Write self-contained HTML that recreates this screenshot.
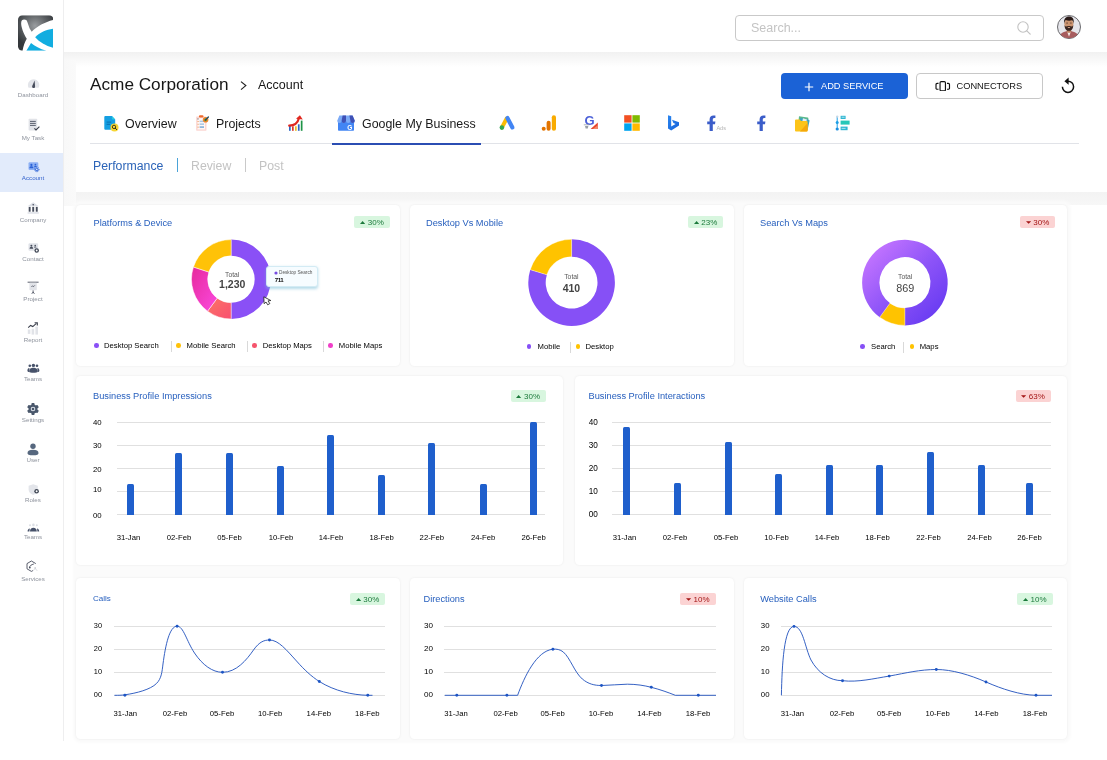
<!DOCTYPE html>
<html>
<head>
<meta charset="utf-8">
<title>Acme Corporation - Account</title>
<style>
*{box-sizing:border-box;margin:0;padding:0}
html,body{width:1107px;height:760px;overflow:hidden;background:#fff}
body{font-family:"Liberation Sans",sans-serif;color:#111;position:relative}
#root{position:absolute;left:0;top:0;width:1107px;height:760px;will-change:transform}
.abs{position:absolute}
/* sidebar */
#side{position:absolute;left:0;top:0;width:64px;height:741px;background:#fff;border-right:1px solid #eeeeef}
.nav{position:absolute;left:1px;width:64px;text-align:center;font-size:6.2px;color:#8d929c;line-height:8px}
.nav svg{display:block;margin:0 auto}
#navact{position:absolute;left:0;top:153px;width:63px;height:39px;background:#e2ebfb}
/* header */
#hdr{position:absolute;left:64px;top:0;width:1043px;height:52px;background:#fff}
#hshadow{position:absolute;left:64px;top:52px;width:1043px;height:15px;background:linear-gradient(#f1f1f1,#fff)}
#search{position:absolute;left:735px;top:15px;width:309px;height:26px;border:1px solid #c9c9c9;border-radius:4px;background:#fff}
#search span{position:absolute;left:15px;top:5px;font-size:12.5px;color:#c4c4c4}
/* top panel */
#gap{position:absolute;left:75.500px;top:192px;width:1031.500px;height:13px;background:linear-gradient(#f3f3f3,#f7f7f7)}
#lstrip{position:absolute;left:64px;top:60px;width:12px;height:146px;background:linear-gradient(90deg,#f8f8f8,#fafafa)}
.crumb1{position:absolute;left:90px;top:74px;font-size:17.2px;color:#161616;white-space:nowrap}
.crumb2{position:absolute;left:258px;top:78.200px;font-size:12.5px;color:#161616}
.btn{position:absolute;top:73px;height:25.500px;border-radius:4px;font-size:9.25px;line-height:26.500px;white-space:nowrap}
#tabline{position:absolute;left:90px;top:143px;width:989px;height:1px;background:#e1e3e8}
#tabact{position:absolute;left:332px;top:142.500px;width:149px;height:2px;background:#2b4db3}
.tab{position:absolute;top:116.700px;font-size:12.4px;color:#1a1a1a;white-space:nowrap}
.sub{position:absolute;top:158.700px;font-size:12.3px;white-space:nowrap}
/* cards */
.card{position:absolute;background:#fff;border-radius:4.5px;box-shadow:0 0 2.500px rgba(0,0,0,.075)}
#backdrop{position:absolute;left:74.500px;top:203px;width:994px;height:537.500px;background:#fbfbfb;border-radius:6px;box-shadow:0 0 3px 2px #fbfbfb}
.ttl{position:absolute;font-size:9.25px;color:#2860be;white-space:nowrap}
.bdg{position:absolute;height:12px;border-radius:2px;font-size:8px;line-height:13px;text-align:center;white-space:nowrap}
.up{background:#d8f6df;color:#1c7a3c}
.dn{background:#fbd3d3;color:#a31515}
.lbl{position:absolute;font-size:7.7px;color:#000;white-space:nowrap}
.xl{position:absolute;font-size:7.7px;color:#000;white-space:nowrap;transform:translateX(-50%)}
.gl{position:absolute;height:1px;background:#e0e0e0}
.bar{position:absolute;width:7px;background:#1f5fcc;border-radius:1.5px 1.5px 0 0}
.lg{position:absolute;font-size:7.7px;color:#000;white-space:nowrap;margin-top:-0.600px}
.dot{position:absolute;width:4.600px;height:4.600px;border-radius:50%;margin:-0.300px 0 0 -0.300px}
.sep{position:absolute;width:1px;height:11px;background:#d9d9d9}
</style>
</head>
<body>
<div id="root">
<!-- HEADER -->
<div id="hdr"></div>
<div id="hshadow"></div>
<div id="lstrip"></div>
<div id="gap"></div>
<div id="search"><span>Search...</span></div>

<!-- SIDEBAR -->
<div id="side"></div>
<div id="navact"></div>
<!-- logo -->
<svg class="abs" style="left:17.500px;top:15px" width="35.500" height="36" viewBox="0 0 36 36">
<defs><clipPath id="lgc"><rect x="0" y="0" width="36" height="36" rx="4.600"/></clipPath>
<radialGradient id="lgg" cx="0.480" cy="0.300" r="0.600"><stop offset="0" stop-color="#9a9da0"/><stop offset="0.550" stop-color="#5e6265"/><stop offset="1" stop-color="#34383b"/></radialGradient></defs>
<g clip-path="url(#lgc)"><rect width="36" height="36" fill="#fff"/>
<path d="M0,0H36V4.600C28,6.500 19,11 13.900,16.700L11.700,13.100L9.400,6.500C9,5 8,4.200 6.200,4.200C4.500,4.200 3.200,5 3.200,8C3.200,12.400 6,19 8.900,23.800C7,27 5.500,31 4.600,36H0Z" fill="url(#lgg)"/>
<path d="M17.400,22.400C22,17.500 29,14.500 36,13.700V33.200C28,31 22,27.500 17.400,22.400Z" fill="#12ade0"/>
<path d="M13.200,28.100C17,31 22,34 28.800,36H8.500Z" fill="#12ade0"/></g></svg>
<!-- dashboard -->
<svg class="abs" style="left:27px;top:77.500px" width="13" height="11" viewBox="0 0 13 11"><path d="M1.600 9.800A5.700 5.700 0 1 1 11.600 9.800Z" fill="#e3e5ea"/><path d="M7.600 2.600L8.100 8.400A1.500 1.500 0 1 1 5.300 7.700Z" fill="#474d5c"/></svg>
<!-- my task -->
<svg class="abs" style="left:28px;top:118px" width="13" height="14" viewBox="0 0 13 14"><rect x="0.600" y="0.800" width="8.600" height="11.800" rx="0.800" fill="#e1e3e8"/><path d="M2 3.400H7.800M2 5.400H7.800M2 7.400H7.800" stroke="#4a5060" stroke-width="0.900"/><path d="M6.400 10.400L8 12L11.400 8.600" fill="none" stroke="#3a3f4c" stroke-width="1.100"/></svg>
<!-- account -->
<svg class="abs" style="left:27.500px;top:162px" width="13" height="11" viewBox="0 0 13 11"><rect x="0.500" y="0.300" width="9.800" height="7.600" rx="1.200" fill="#8db0f4"/><circle cx="3.400" cy="2.900" r="1.100" fill="#2b62d6"/><path d="M1.400 6.200C1.400 4.700 2.200 4.300 3.400 4.300C4.600 4.300 5.400 4.700 5.400 6.200Z" fill="#2b62d6"/><circle cx="7.400" cy="2.700" r="0.900" fill="#2b62d6"/><path d="M6 5.200C6 4.200 6.600 3.900 7.400 3.900C8.200 3.900 8.800 4.200 8.800 5.200Z" fill="#2b62d6"/><circle cx="8.800" cy="7.400" r="2" fill="#2b62d6" stroke="#e2ebfb" stroke-width="0.500"/><circle cx="8.800" cy="7.400" r="2.300" fill="none" stroke="#2b62d6" stroke-width="0.900" stroke-dasharray="0.900 0.900"/><circle cx="8.800" cy="7.400" r="0.800" fill="#e2ebfb"/></svg>
<!-- company -->
<svg class="abs" style="left:26.500px;top:202px" width="13" height="12" viewBox="0 0 13 12"><path d="M6.200 0.300L11.800 4.300H0.600Z" fill="#dcdfe6"/><rect x="0.600" y="10.200" width="11.200" height="1.500" fill="#dcdfe6"/><rect x="1.700" y="4.900" width="1.900" height="4.800" fill="#474d5c"/><rect x="5.250" y="4.900" width="1.900" height="4.800" fill="#474d5c"/><rect x="8.800" y="4.900" width="1.900" height="4.800" fill="#474d5c"/><circle cx="6.200" cy="2.700" r="0.800" fill="#474d5c"/></svg>
<!-- contact -->
<svg class="abs" style="left:27.500px;top:243px" width="13" height="11" viewBox="0 0 13 11"><rect x="0.500" y="0.300" width="9.600" height="7.400" rx="1.200" fill="#dfe2e8"/><circle cx="3.400" cy="2.700" r="1" fill="#474d5c"/><path d="M1.600 5.800C1.600 4.500 2.300 4.100 3.400 4.100C4.500 4.100 5.200 4.500 5.200 5.800Z" fill="#474d5c"/><circle cx="7.200" cy="2.500" r="0.800" fill="#474d5c"/><path d="M6 4.600C6 3.800 6.500 3.500 7.200 3.500C7.900 3.500 8.400 3.800 8.400 4.600Z" fill="#474d5c"/><circle cx="8.700" cy="7.500" r="2.250" fill="#3f4654"/><circle cx="8.700" cy="7.500" r="0.950" fill="#fff"/></svg>
<!-- project -->
<svg class="abs" style="left:26.500px;top:281px" width="13" height="14" viewBox="0 0 13 14"><path d="M0.600 1.200H11.600" stroke="#474d5c" stroke-width="0.900"/><rect x="2.400" y="1.800" width="7.400" height="7.400" rx="0.600" fill="#e1e3e8"/><path d="M4.400 6L5.600 4.800L6.600 5.600L7.800 4.400" fill="none" stroke="#474d5c" stroke-width="0.800"/><path d="M6.100 9.400V11M4.800 12.800L6.100 11L7.400 12.800" fill="none" stroke="#474d5c" stroke-width="0.900"/></svg>
<!-- report -->
<svg class="abs" style="left:26.500px;top:321.700px" width="13" height="13" viewBox="0 0 13 13"><rect x="0.800" y="7.500" width="2.600" height="4.400" fill="#e1e3e8"/><rect x="4.600" y="6.800" width="2.600" height="5.800" fill="#e1e3e8"/><rect x="8.400" y="4.600" width="2.600" height="8" fill="#e1e3e8"/><path d="M1.200 5.600L3.600 3.400L5.800 4.600L9.400 1.400" fill="none" stroke="#3a3f4c" stroke-width="1.100"/><path d="M7.600 0.800H10.300V3.400" fill="none" stroke="#3a3f4c" stroke-width="1.100"/></svg>
<!-- teams -->
<svg class="abs" style="left:27px;top:363px" width="13" height="11" viewBox="0 0 13 11"><circle cx="6.400" cy="2.400" r="1.700" fill="#47526a"/><circle cx="2.800" cy="2.800" r="1.300" fill="#47526a"/><circle cx="10" cy="2.800" r="1.300" fill="#47526a"/><path d="M2.200 8.800C2.200 5.600 4 4.800 6.400 4.800C8.800 4.800 10.600 5.600 10.600 8.800C10.600 10.200 2.200 10.200 2.200 8.800Z" fill="#47526a"/><path d="M0.400 7.800C0.400 6 1 5.200 2.400 5V9C1.200 9 0.400 8.800 0.400 7.800ZM12.400 7.800C12.400 6 11.800 5.200 10.400 5V9C11.600 9 12.400 8.800 12.400 7.800Z" fill="#47526a"/></svg>
<!-- settings -->
<svg class="abs" style="left:26.500px;top:402.500px" width="12" height="12" viewBox="0 0 12 12"><g transform="translate(6 6)"><g fill="#4a586c"><rect x="-1.500" y="-5.900" width="3" height="11.800" rx="0.600"/><rect x="-1.500" y="-5.900" width="3" height="11.800" rx="0.600" transform="rotate(60)"/><rect x="-1.500" y="-5.900" width="3" height="11.800" rx="0.600" transform="rotate(120)"/><circle r="4.500"/></g><circle r="2.300" fill="#dfe4ec"/><circle r="1.300" fill="#4a586c"/></g></svg>
<!-- user -->
<svg class="abs" style="left:26.500px;top:442.500px" width="12" height="13" viewBox="0 0 12 13"><circle cx="6" cy="3.300" r="2.700" fill="#56677e"/><path d="M0.500 10C0.500 7.600 2.600 6.800 6 6.800C9.400 6.800 11.500 7.600 11.500 10C11.500 11.600 10 12.300 6 12.300C2 12.300 0.500 11.600 0.500 10Z" fill="#56677e"/></svg>
<!-- roles -->
<svg class="abs" style="left:27.500px;top:484px" width="12" height="12" viewBox="0 0 12 12"><path d="M5.200 0.200L9.800 1.800V5.600C9.800 8.400 7.600 10.200 5.200 11C2.800 10.200 0.600 8.400 0.600 5.600V1.800Z" fill="#e3e5ea"/><circle cx="8.600" cy="7.300" r="2.300" fill="#3f4654"/><circle cx="8.600" cy="7.300" r="1" fill="#fff"/></svg>
<!-- teams 2 -->
<svg class="abs" style="left:27px;top:523px" width="13" height="10" viewBox="0 0 13 10"><circle cx="6.400" cy="1.900" r="1.300" fill="#dcdfe5"/><circle cx="3" cy="2.300" r="1" fill="#dcdfe5"/><circle cx="9.800" cy="2.300" r="1" fill="#dcdfe5"/><path d="M3 8.400C3 6 4.400 4.800 6.400 4.800C8.400 4.800 9.800 6 9.800 8.400Z" fill="#47526a"/><path d="M0.600 8.400C0.600 6.600 1.400 5.600 2.800 5.400L2.400 8.400ZM12.200 8.400C12.200 6.600 11.400 5.600 10 5.400L10.400 8.400Z" fill="#47526a"/></svg>
<!-- services -->
<svg class="abs" style="left:26px;top:560px" width="12" height="13" viewBox="0 0 12 13"><path d="M9.800 3.600L5.400 1L1 3.600V8.800L5.400 11.400L7 10.500" fill="none" stroke="#474d5c" stroke-width="0.900"/><path d="M3.600 7.400C3.600 5.600 5.400 4.800 7.800 4" fill="none" stroke="#474d5c" stroke-width="0.900"/><circle cx="3.800" cy="7.600" r="0.900" fill="#474d5c"/><path d="M7 10.800L9.200 8.400L11.200 10.800" fill="none" stroke="#cfd2d8" stroke-width="0.800"/><circle cx="9.200" cy="8" r="0.900" fill="#cfd2d8"/></svg>
<div class="nav" style="top:90.7px;color:#8d929c">Dashboard</div>
<div class="nav" style="top:133.9px;color:#8d929c">My Task</div>
<div class="nav" style="top:174.4px;color:#3463cc">Account</div>
<div class="nav" style="top:215.5px;color:#8d929c">Company</div>
<div class="nav" style="top:254.6px;color:#8d929c">Contact</div>
<div class="nav" style="top:294.9px;color:#8d929c">Project</div>
<div class="nav" style="top:335.7px;color:#8d929c">Report</div>
<div class="nav" style="top:374.6px;color:#8d929c">Teams</div>
<div class="nav" style="top:415.7px;color:#8d929c">Settings</div>
<div class="nav" style="top:456.3px;color:#8d929c">User</div>
<div class="nav" style="top:496.0px;color:#8d929c">Roles</div>
<div class="nav" style="top:533.1px;color:#8d929c">Teams</div>
<div class="nav" style="top:574.7px;color:#8d929c">Services</div>

<!-- TOP PANEL -->
<div class="crumb1">Acme Corporation</div>
<svg class="abs" style="left:238px;top:79px" width="10" height="13" viewBox="0 0 10 13"><path d="M3 2.600 L7.800 6.600 L3 10.600" fill="none" stroke="#222" stroke-width="1.200"/></svg>
<div class="crumb2">Account</div>
<!-- search icon -->
<svg class="abs" style="left:1016px;top:20px" width="16" height="16" viewBox="0 0 16 16"><circle cx="7" cy="7" r="5.2" fill="none" stroke="#c2c2c2" stroke-width="1.1"/><path d="M10.8 10.8 L14.2 14.2" stroke="#c2c2c2" stroke-width="1.2" stroke-linecap="round"/></svg>
<!-- avatar -->
<svg class="abs" style="left:1057.400px;top:15px" width="24" height="24" viewBox="0 0 24 24">
<defs><clipPath id="avc"><circle cx="12" cy="12" r="11.200"/></clipPath></defs>
<circle cx="12" cy="12" r="11.500" fill="#e5e5ea" stroke="#5a5a5e" stroke-width="0.900"/>
<g clip-path="url(#avc)"><g transform="translate(0.200 -0.900)">
<path d="M1.500 25C2.200 19 7 17 11.800 17C16.600 17 21.500 19 22.200 25Z" fill="#a75c5e"/>
<path d="M10 17.600L11.800 22.600L13.600 17.600Z" fill="#f3ece9"/>
<path d="M9.600 14.500V17.800C10.600 19 13 19 14 17.800V14.500Z" fill="#b97f60"/>
<ellipse cx="11.700" cy="10" rx="4.500" ry="5.400" fill="#cb9470"/>
<path d="M7.300 10.800C7.500 15.600 9.800 16.700 11.700 16.700C13.600 16.700 15.900 15.600 16.100 10.800C15.400 12.600 14.200 12.400 13.400 12.200C12.400 11.900 11 11.900 10 12.200C9.200 12.400 8 12.600 7.300 10.800Z" fill="#3a2621"/>
<path d="M10.300 13.300C11.200 12.900 12.200 12.900 13.100 13.300C12.400 14 11 14 10.300 13.300Z" fill="#c99a80"/>
<path d="M6.900 9.800C6.200 4.600 8.800 2.400 11.900 2.400C15.200 2.400 17.200 4.800 16.500 9.800C16.200 7.800 15.700 6.800 14.800 6.200C12.600 6.900 10.200 6.700 8.600 6C7.800 6.800 7.200 8 6.900 9.800Z" fill="#2a1b18"/>
<rect x="9" y="8.600" width="1.800" height="0.700" fill="#4a3028"/><rect x="12.700" y="8.600" width="1.800" height="0.700" fill="#4a3028"/>
</g></g></svg>
<!-- buttons -->
<div class="btn" style="left:781px;width:127px;background:#1b62d6;color:#fff"><svg class="abs" style="left:23px;top:8.500px" width="10" height="10" viewBox="0 0 10 10"><path d="M5 0.8V9.2M0.8 5H9.2" stroke="#fff" stroke-width="1.2"/></svg><span class="abs" style="left:40px;top:0">ADD SERVICE</span></div>
<div class="btn" style="left:915.500px;width:127px;background:#fff;border:1px solid #c8c8c8;color:#111;line-height:24.500px"><svg class="abs" style="left:18.500px;top:6.700px" width="15.500" height="10.600" viewBox="0 0 16 11"><rect x="5.2" y="0.7" width="5.6" height="9.6" rx="1.2" fill="none" stroke="#111" stroke-width="1.2"/><path d="M3.6 2.4H2.2a1.2 1.2 0 0 0-1.2 1.2v3.8a1.2 1.2 0 0 0 1.2 1.2h1.4M12.4 2.4h1.4a1.2 1.2 0 0 1 1.2 1.2v3.8a1.2 1.2 0 0 1-1.2 1.2h-1.4" fill="none" stroke="#111" stroke-width="1.2"/></svg><span class="abs" style="left:40px;top:0">CONNECTORS</span></div>
<!-- refresh -->
<svg class="abs" style="left:1060px;top:76.800px" width="16" height="19" viewBox="0 0 16 19"><path d="M8 4.2 A5.6 5.6 0 1 1 2.4 9.8" fill="none" stroke="#111" stroke-width="1.5"/><path d="M8.6 0.6 L4.4 4.2 L8.6 7.8 Z" fill="#111"/></svg>
<!-- TAB ICONS -->
<!-- overview -->
<svg class="abs" style="left:103px;top:115px" width="17" height="17" viewBox="0 0 17 17"><path d="M2.3 1h6.6l3.3 3.4v9.3a1 1 0 0 1-1 1H2.3a1 1 0 0 1-1-1V2a1 1 0 0 1 1-1z" fill="#149fe2"/><path d="M8.9 1l3.3 3.4H9.9a1 1 0 0 1-1-1z" fill="#28cbe0"/><rect x="3.6" y="6.6" width="4.6" height="1" fill="#0b6fb0"/><rect x="3.6" y="8.8" width="3.4" height="1" fill="#0b6fb0"/><circle cx="11.5" cy="12.4" r="4" fill="#f7d634"/><circle cx="11" cy="11.9" r="1.7" fill="none" stroke="#2a2a16" stroke-width="0.9"/><path d="M12.3 13.2l1.5 1.5" stroke="#2a2a16" stroke-width="1" stroke-linecap="round"/></svg>
<!-- projects -->
<svg class="abs" style="left:195px;top:114px" width="17" height="18" viewBox="0 0 17 18"><rect x="1.1" y="2.4" width="10.4" height="14.4" rx="0.8" fill="#fbd7d3"/><rect x="2.6" y="4.2" width="7.4" height="11.2" fill="#fff6f4"/><rect x="3.9" y="1.2" width="4.6" height="2.3" rx="1.1" fill="#ef6a2c"/><rect x="2.2" y="4.6" width="1.6" height="0.7" fill="#555"/><rect x="4.6" y="6.6" width="4.4" height="1.5" fill="#a9c7e4"/><rect x="4.6" y="9.4" width="4.4" height="1.5" fill="#a9c7e4"/><rect x="4.6" y="12.2" width="4.4" height="1.8" fill="#8fb6dc"/><rect x="2.6" y="7" width="1" height="0.9" fill="#ef8a3c"/><rect x="2.6" y="9.8" width="1" height="0.9" fill="#ef8a3c"/><rect x="2.6" y="12.7" width="1" height="0.9" fill="#ef8a3c"/><circle cx="10.6" cy="5.8" r="2.8" fill="#f0832c"/><circle cx="10.6" cy="5.8" r="1.5" fill="#7a9a2c"/><path d="M10.4 6l3-3" stroke="#1f4d63" stroke-width="1.3" stroke-linecap="round"/></svg>
<!-- growth chart -->
<svg class="abs" style="left:288px;top:114px" width="16" height="18" viewBox="0 0 16 18"><rect x="1" y="11.9" width="1.7" height="4.9" fill="#2f66c4"/><rect x="4" y="12.3" width="1.7" height="4.5" fill="#d83a2e"/><rect x="7" y="12.3" width="1.7" height="4.5" fill="#e8c02c"/><rect x="9.9" y="10.3" width="1.7" height="6.5" fill="#2f66c4"/><rect x="12.8" y="6.6" width="1.7" height="10.2" fill="#1e9447"/><path d="M1.2 11.6C6.4 11.4 9.8 8.6 10.8 4.4" fill="none" stroke="#e0281f" stroke-width="2.2" stroke-linecap="round"/><path d="M8 4.7L11.9 1.2L14.8 5.6Z" fill="#e0281f"/></svg>
<!-- google my business -->
<svg class="abs" style="left:337px;top:115px" width="18" height="16" viewBox="0 0 18 16"><rect x="1" y="6" width="16" height="9.8" rx="0.8" fill="#4285f4"/><path d="M2.4 0.4h13.2l2.2 5.4a2.2 2.2 0 0 1-4.4 0a2.2 2.2 0 0 1-4.4 0a2.2 2.2 0 0 1-4.4 0a2.2 2.2 0 0 1-4.4 0z" fill="#7baaf7"/><path d="M5.6 0.4h3.4v5.4a2.2 2.2 0 0 1-4.4 0z" fill="#3f51b5"/><path d="M12.4 0.4h3.2l2.2 5.4a2.2 2.2 0 0 1-4.4 0z" fill="#3f51b5"/><text x="12.9" y="14.6" font-family="Liberation Sans, sans-serif" font-weight="bold" font-size="6.6" fill="#fff" text-anchor="middle">G</text></svg>
<!-- google ads -->
<svg class="abs" style="left:498px;top:115px" width="18" height="16" viewBox="0 0 18 16"><path d="M8.6 3.6L4 12.4" stroke="#fbbc04" stroke-width="4" stroke-linecap="round"/><path d="M9.4 3L14.4 12.4" stroke="#4285f4" stroke-width="4.2" stroke-linecap="round"/><circle cx="3.9" cy="12.6" r="2.3" fill="#34a853"/></svg>
<!-- analytics -->
<svg class="abs" style="left:541px;top:115px" width="16" height="16" viewBox="0 0 16 16"><rect x="10.8" y="0.2" width="4.2" height="15.6" rx="2.1" fill="#f9ab00"/><rect x="5.6" y="5.8" width="4" height="10" rx="2" fill="#e37400"/><circle cx="2.7" cy="13.8" r="2" fill="#e37400"/></svg>
<!-- google shopping-ish -->
<svg class="abs" style="left:583px;top:114px" width="16" height="17" viewBox="0 0 16 17"><text x="6.6" y="10.6" font-family="Liberation Sans, sans-serif" font-weight="bold" font-size="13" fill="#4a5fd8" text-anchor="middle">G</text><path d="M7.6 14.9L14.8 8.6V14.9Z" fill="#e8452c"/><path d="M9.8 14.9L14.8 11.2V14.9Z" fill="#f28a6a"/><path d="M0.8 10.8H6.4" stroke="#9aa0a6" stroke-width="0.8"/><path d="M2 12l0.6 2.6h2.2l0.6-2.6z" fill="#9aa0a6"/></svg>
<!-- microsoft -->
<svg class="abs" style="left:624px;top:115px" width="16" height="16" viewBox="0 0 16 16"><rect x="0.2" y="0.2" width="7.4" height="7.4" fill="#f25022"/><rect x="8.4" y="0.2" width="7.4" height="7.4" fill="#7fba00"/><rect x="0.2" y="8.4" width="7.4" height="7.4" fill="#00a4ef"/><rect x="8.4" y="8.4" width="7.4" height="7.4" fill="#ffb900"/></svg>
<!-- bing -->
<svg class="abs" style="left:667px;top:115px" width="13" height="16" viewBox="0 0 13 16"><defs><linearGradient id="bg1" x1="0" y1="0" x2="1" y2="1"><stop offset="0" stop-color="#2a86f0"/><stop offset="1" stop-color="#1560d8"/></linearGradient></defs><path d="M1 0.2L4.2 1.3V11.4L8.6 9L6.4 8L5 4.8L12 7.2V10.6L4.2 15.4L1 13.4Z" fill="url(#bg1)"/></svg>
<!-- f ads -->
<svg class="abs" style="left:706px;top:115px" width="24" height="17" viewBox="0 0 24 17"><path d="M3.6 16V9.2H1.2V6.4H3.6V4.4C3.6 1.8 5.2 0.4 7.4 0.4C8.4 0.4 9.4 0.6 9.4 0.6V3H8.2C7 3 6.8 3.8 6.8 4.6V6.4H9.4L9 9.2H6.8V16Z" fill="#3b5dc9"/><text x="10.4" y="15.4" font-family="Liberation Sans, sans-serif" font-size="5.6" fill="#b4b4b4">Ads</text></svg>
<!-- f -->
<svg class="abs" style="left:756px;top:115px" width="11" height="17" viewBox="0 0 11 17"><path d="M3.6 16V9.2H1.2V6.4H3.6V4.4C3.6 1.8 5.2 0.4 7.4 0.4C8.4 0.4 9.4 0.6 9.4 0.6V3H8.2C7 3 6.8 3.8 6.8 4.6V6.4H9.4L9 9.2H6.8V16Z" fill="#3b5dc9"/></svg>
<!-- files -->
<svg class="abs" style="left:794px;top:115px" width="17" height="17" viewBox="0 0 17 17"><path d="M5 1.2l8.6 1.4a1 1 0 0 1 .8 1.1L13.2 14H3.6z" fill="#5bb98c"/><path d="M6.4 2.8l8.4 2a1 1 0 0 1 .7 1.2L13.6 15H4.4z" fill="#3fa3c4"/><path d="M9 3.2l4 1.4-1 2.4-3.6-1z" fill="#e8eef0"/><path d="M1 5.4a1 1 0 0 1 1-1h3.600l1.400 1.600h5.600a1 1 0 0 1 1 1v8.400a1 1 0 0 1-1 1H2a1 1 0 0 1-1-1z" fill="#fcc419"/><path d="M13.600 8L6 16.400H12.600a1 1 0 0 0 1-1z" fill="#f5a80b"/></svg>
<!-- list / timeline -->
<svg class="abs" style="left:834px;top:115px" width="17" height="17" viewBox="0 0 17 17"><path d="M3.2 1.400V14.800" stroke="#1d9fe6" stroke-width="1"/><circle cx="3.200" cy="1.600" r="1.200" fill="#c7d9e6"/><circle cx="3.200" cy="7.600" r="1.500" fill="#1d9fe6"/><circle cx="3.200" cy="14" r="1.600" fill="#1d8fe0"/><rect x="6.600" y="0.800" width="5" height="3.200" fill="#2eb6d2"/><rect x="6.600" y="5.600" width="9" height="4" fill="#25c7b8"/><rect x="6.600" y="11.600" width="7" height="3.600" fill="#2eb6d2"/><rect x="7.600" y="1.800" width="3" height="0.700" fill="#e6f7fa"/><rect x="7.600" y="12.900" width="4" height="0.700" fill="#e6f7fa"/></svg>
<div id="tabline"></div>
<div id="tabact"></div>
<div class="tab" style="left:125px">Overview</div>
<div class="tab" style="left:216px">Projects</div>
<div class="tab" style="left:362px">Google My Business</div>
<div class="sub" style="left:93px;color:#2c64b8">Performance</div>
<div class="abs" style="left:177px;top:158px;width:1px;height:14px;background:#4aa3d8"></div>
<div class="sub" style="left:191px;color:#c3c3c3">Review</div>
<div class="abs" style="left:245px;top:158px;width:1px;height:14px;background:#c9c9c9"></div>
<div class="sub" style="left:259px;color:#c3c3c3">Post</div>

<!-- CARDS -->
<div id="backdrop"></div>
<div class="card" style="left:76px;top:205px;width:324px;height:161px"></div>
<div class="card" style="left:410px;top:205px;width:324px;height:161px"></div>
<div class="card" style="left:744px;top:205px;width:323px;height:161px"></div>
<div class="card" style="left:76px;top:376px;width:487.300px;height:189px"></div>
<div class="card" style="left:575px;top:376px;width:492px;height:189px"></div>
<div class="card" style="left:76px;top:578px;width:324px;height:161px"></div>
<div class="card" style="left:410px;top:578px;width:324px;height:161px"></div>
<div class="card" style="left:744px;top:578px;width:323px;height:161px"></div>
<!-- DONUT ROW -->
<div class="ttl" style="left:93.500px;top:217.500px">Platforms &amp; Device</div>
<div class="bdg up" style="left:354px;top:216px;width:36px"><svg width="5.200" height="3" viewBox="0 0 6 4" preserveAspectRatio="none" style="display:inline-block;vertical-align:0.600px;margin-right:2.500px"><path d="M0 4L3 0L6 4Z" fill="#1c7a3c"/></svg>30%</div>
<div class="ttl" style="left:426px;top:217.500px">Desktop Vs Mobile</div>
<div class="bdg up" style="left:688px;top:216px;width:35px"><svg width="5.200" height="3" viewBox="0 0 6 4" preserveAspectRatio="none" style="display:inline-block;vertical-align:0.600px;margin-right:2.500px"><path d="M0 4L3 0L6 4Z" fill="#1c7a3c"/></svg>23%</div>
<div class="ttl" style="left:760px;top:217.500px">Search Vs Maps</div>
<div class="bdg dn" style="left:1020px;top:216px;width:35px"><svg width="5.200" height="3" viewBox="0 0 6 4" preserveAspectRatio="none" style="display:inline-block;vertical-align:0.600px;margin-right:2.500px"><path d="M0 0.300L3 3.700L6 0.300Z" fill="#a31515"/></svg>30%</div>
<svg class="abs" style="left:76px;top:205px" width="991" height="161" viewBox="76 205 991 161">
<defs><linearGradient id="gpk" x1="0" y1="0" x2="1" y2="1"><stop offset="0" stop-color="#e62a9c"/><stop offset="1" stop-color="#fb4ae0"/></linearGradient><linearGradient id="gcr" x1="0" y1="0" x2="1" y2="1"><stop offset="0" stop-color="#fb7466"/><stop offset="1" stop-color="#f94f70"/></linearGradient><linearGradient id="gpu" gradientUnits="userSpaceOnUse" x1="872" y1="250" x2="938" y2="316"><stop offset="0" stop-color="#c374ff"/><stop offset="0.500" stop-color="#8f55f8"/><stop offset="1" stop-color="#683bf2"/></linearGradient></defs>
<path d="M231.20,239.60A39.7,39.7 0 0 1 231.20,319.00L231.20,302.80A23.5,23.5 0 0 0 231.20,255.80Z" fill="#8a50f6"/><path d="M231.20,319.00A39.7,39.7 0 0 1 207.53,311.17L217.19,298.17A23.5,23.5 0 0 0 231.20,302.80Z" fill="url(#gcr)" stroke="#fff" stroke-width="0.500"/><path d="M207.53,311.17A39.7,39.7 0 0 1 193.44,267.03L208.85,272.04A23.5,23.5 0 0 0 217.19,298.17Z" fill="url(#gpk)" stroke="#fff" stroke-width="0.500"/><path d="M193.44,267.03A39.7,39.7 0 0 1 231.20,239.60L231.20,255.80A23.5,23.5 0 0 0 208.85,272.04Z" fill="#ffc208" stroke="#fff" stroke-width="0.500"/>
<path d="M571.60,239.30A43.3,43.3 0 1 1 530.28,269.65L546.89,274.85A25.9,25.9 0 1 0 571.60,256.70Z" fill="#8650f6"/><path d="M530.28,269.65A43.3,43.3 0 0 1 571.60,239.30L571.60,256.70A25.9,25.9 0 0 0 546.89,274.85Z" fill="#ffc300" stroke="#fff" stroke-width="0.400"/>
<path d="M880.05,317.44A42.8,42.8 0 1 1 904.68,325.40L904.77,308.10A25.5,25.5 0 1 0 890.09,303.36Z" fill="url(#gpu)"/><path d="M904.90,325.40A42.8,42.8 0 0 1 879.74,317.23L889.91,303.23A25.5,25.5 0 0 0 904.90,308.10Z" fill="#ffc300" stroke="#fff" stroke-width="0.400"/>
</svg>
<div class="abs" style="left:202.2px;top:269.5px;width:60px;text-align:center;font-size:6.800px;line-height:9px;color:#5a5a5a">Total</div>
<div class="abs" style="left:202.2px;top:277.7px;width:60px;text-align:center;font-size:10.5px;line-height:13px;color:#444;font-weight:bold">1,230</div>
<div class="abs" style="left:541.4px;top:271.6px;width:60px;text-align:center;font-size:6.800px;line-height:9px;color:#5a5a5a">Total</div>
<div class="abs" style="left:541.4px;top:281.5px;width:60px;text-align:center;font-size:10.5px;line-height:13px;color:#444;font-weight:bold">410</div>
<div class="abs" style="left:875.2px;top:271.6px;width:60px;text-align:center;font-size:6.800px;line-height:9px;color:#5a5a5a">Total</div>
<div class="abs" style="left:875.2px;top:281.5px;width:60px;text-align:center;font-size:10.8px;line-height:13px;color:#444;font-weight:normal">869</div>
<div class="abs" style="left:266px;top:265.500px;width:51.500px;height:21px;background:#f6fcff;border:1px solid #d3ebf4;border-radius:3px;box-shadow:0 1.500px 3px rgba(120,190,215,.550)"></div>
<svg class="abs" style="left:274px;top:270.500px" width="4" height="4" viewBox="0 0 4 4"><circle cx="2" cy="2" r="1.600" fill="#744be0"/></svg>
<div class="abs" style="left:279px;top:269px;font-size:4.700px;line-height:7px;color:#555;white-space:nowrap">Desktop Search</div>
<div class="abs" style="left:274.700px;top:275.700px;font-size:6.200px;line-height:8px;color:#111;font-weight:bold;letter-spacing:-0.450px">711</div>
<svg class="abs" style="left:262.800px;top:295.900px" width="10" height="10" viewBox="0 0 10 10"><path d="M0.800 0.800L1.100 7.700L3 6L4.700 8.800L6.800 7.600L5 4.900L7.800 4.500Z" fill="#fff" stroke="#1a1a1a" stroke-width="0.800" stroke-linejoin="round"/></svg>
<div class="dot" style="left:94.5px;top:343.5px;background:#8a50f6"></div>
<div class="lg" style="left:104px;top:340.5px;line-height:11px">Desktop Search</div>
<div class="sep" style="left:171px;top:340.5px"></div>
<div class="dot" style="left:176.5px;top:343.5px;background:#ffc208"></div>
<div class="lg" style="left:186.5px;top:340.5px;line-height:11px">Mobile Search</div>
<div class="sep" style="left:247px;top:340.5px"></div>
<div class="dot" style="left:252.5px;top:343.5px;background:#f5546c"></div>
<div class="lg" style="left:262.8px;top:340.5px;line-height:11px">Desktop Maps</div>
<div class="sep" style="left:323px;top:340.5px"></div>
<div class="dot" style="left:328.5px;top:343.5px;background:#f03fc8"></div>
<div class="lg" style="left:338.8px;top:340.5px;line-height:11px">Mobile Maps</div>
<div class="dot" style="left:526.8px;top:344.5px;background:#8650f6"></div>
<div class="lg" style="left:537.6px;top:341.5px;line-height:11px">Mobile</div>
<div class="sep" style="left:569.5px;top:341.5px"></div>
<div class="dot" style="left:576.2px;top:344.5px;background:#ffc300"></div>
<div class="lg" style="left:585.5px;top:341.5px;line-height:11px">Desktop</div>
<div class="dot" style="left:860.7px;top:344.5px;background:#8650f6"></div>
<div class="lg" style="left:871px;top:341.5px;line-height:11px">Search</div>
<div class="sep" style="left:903.4px;top:341.5px"></div>
<div class="dot" style="left:909.8px;top:344.5px;background:#ffc300"></div>
<div class="lg" style="left:919.7px;top:341.5px;line-height:11px">Maps</div>

<!-- ROW2 -->
<div class="ttl" style="left:93px;top:390.500px">Business Profile Impressions</div>
<div class="bdg up" style="left:510.5px;top:390px;width:35.5px"><svg width="5.200" height="3" viewBox="0 0 6 4" preserveAspectRatio="none" style="display:inline-block;vertical-align:0.600px;margin-right:2.500px"><path d="M0 4L3 0L6 4Z" fill="#1c7a3c"/></svg>30%</div>
<div class="ttl" style="left:588.500px;top:390.500px">Business Profile Interactions</div>
<div class="bdg dn" style="left:1015.5px;top:390px;width:35px"><svg width="5.200" height="3" viewBox="0 0 6 4" preserveAspectRatio="none" style="display:inline-block;vertical-align:0.600px;margin-right:2.500px"><path d="M0 0.300L3 3.700L6 0.300Z" fill="#a31515"/></svg>63%</div>
<div class="gl" style="left:116.5px;top:422px;width:428.5px"></div>
<div class="lbl" style="left:93px;top:417.4px;line-height:11px;font-size:7.8px">40</div>
<div class="gl" style="left:116.5px;top:445px;width:428.5px"></div>
<div class="lbl" style="left:93px;top:440.4px;line-height:11px;font-size:7.8px">30</div>
<div class="gl" style="left:116.5px;top:468px;width:428.5px"></div>
<div class="lbl" style="left:93px;top:463.9px;line-height:11px;font-size:7.8px">20</div>
<div class="gl" style="left:116.5px;top:491px;width:428.5px"></div>
<div class="lbl" style="left:93px;top:483.8px;line-height:11px;font-size:7.8px">10</div>
<div class="gl" style="left:116.5px;top:514px;width:428.5px"></div>
<div class="lbl" style="left:93px;top:509.9px;line-height:11px;font-size:7.8px">00</div>
<div class="bar" style="left:127px;top:484.3px;height:30.7px"></div>
<div class="bar" style="left:175px;top:453.4px;height:61.6px"></div>
<div class="bar" style="left:226px;top:453.4px;height:61.6px"></div>
<div class="bar" style="left:277px;top:466.2px;height:48.8px"></div>
<div class="bar" style="left:327px;top:435.2px;height:79.8px"></div>
<div class="bar" style="left:378px;top:475.0px;height:40.0px"></div>
<div class="bar" style="left:428px;top:443.2px;height:71.8px"></div>
<div class="bar" style="left:480px;top:484.3px;height:30.7px"></div>
<div class="bar" style="left:530px;top:422.2px;height:92.8px"></div>
<div class="xl" style="left:128.5px;top:532.100px;line-height:11px">31-Jan</div>
<div class="xl" style="left:179.0px;top:532.100px;line-height:11px">02-Feb</div>
<div class="xl" style="left:229.5px;top:532.100px;line-height:11px">05-Feb</div>
<div class="xl" style="left:281.0px;top:532.100px;line-height:11px">10-Feb</div>
<div class="xl" style="left:331.0px;top:532.100px;line-height:11px">14-Feb</div>
<div class="xl" style="left:381.7px;top:532.100px;line-height:11px">18-Feb</div>
<div class="xl" style="left:431.8px;top:532.100px;line-height:11px">22-Feb</div>
<div class="xl" style="left:483.2px;top:532.100px;line-height:11px">24-Feb</div>
<div class="xl" style="left:533.6px;top:532.100px;line-height:11px">26-Feb</div>
<div class="gl" style="left:612.3px;top:422px;width:438.3px"></div>
<div class="lbl" style="left:588.8px;top:416.9px;line-height:11px;font-size:8.2px">40</div>
<div class="gl" style="left:612.3px;top:445px;width:438.3px"></div>
<div class="lbl" style="left:588.8px;top:439.7px;line-height:11px;font-size:8.2px">30</div>
<div class="gl" style="left:612.3px;top:468px;width:438.3px"></div>
<div class="lbl" style="left:588.8px;top:463.1px;line-height:11px;font-size:8.2px">20</div>
<div class="gl" style="left:612.3px;top:491px;width:438.3px"></div>
<div class="lbl" style="left:588.8px;top:485.8px;line-height:11px;font-size:8.2px">10</div>
<div class="gl" style="left:612.3px;top:514px;width:438.3px"></div>
<div class="lbl" style="left:588.8px;top:509.1px;line-height:11px;font-size:8.2px">00</div>
<div class="bar" style="left:623px;top:427.2px;height:87.8px"></div>
<div class="bar" style="left:674px;top:483.3px;height:31.7px"></div>
<div class="bar" style="left:725px;top:441.6px;height:73.4px"></div>
<div class="bar" style="left:775px;top:474.1px;height:40.9px"></div>
<div class="bar" style="left:826px;top:465.2px;height:49.8px"></div>
<div class="bar" style="left:876px;top:465.2px;height:49.8px"></div>
<div class="bar" style="left:927px;top:452.0px;height:63.0px"></div>
<div class="bar" style="left:978px;top:465.2px;height:49.8px"></div>
<div class="bar" style="left:1026px;top:483.2px;height:31.8px"></div>
<div class="xl" style="left:624.5px;top:532.100px;line-height:11px">31-Jan</div>
<div class="xl" style="left:675.0px;top:532.100px;line-height:11px">02-Feb</div>
<div class="xl" style="left:726.0px;top:532.100px;line-height:11px">05-Feb</div>
<div class="xl" style="left:776.5px;top:532.100px;line-height:11px">10-Feb</div>
<div class="xl" style="left:827.0px;top:532.100px;line-height:11px">14-Feb</div>
<div class="xl" style="left:877.5px;top:532.100px;line-height:11px">18-Feb</div>
<div class="xl" style="left:928.5px;top:532.100px;line-height:11px">22-Feb</div>
<div class="xl" style="left:979.5px;top:532.100px;line-height:11px">24-Feb</div>
<div class="xl" style="left:1029.5px;top:532.100px;line-height:11px">26-Feb</div>
<!-- ROW3 -->
<div class="ttl" style="left:93px;top:593.800px;font-size:8px">Calls</div>
<div class="bdg up" style="left:350px;top:592.5px;width:35px"><svg width="5.200" height="3" viewBox="0 0 6 4" preserveAspectRatio="none" style="display:inline-block;vertical-align:0.600px;margin-right:2.500px"><path d="M0 4L3 0L6 4Z" fill="#1c7a3c"/></svg>30%</div>
<div class="ttl" style="left:423.500px;top:593.500px">Directions</div>
<div class="bdg dn" style="left:680px;top:592.5px;width:35.5px"><svg width="5.200" height="3" viewBox="0 0 6 4" preserveAspectRatio="none" style="display:inline-block;vertical-align:0.600px;margin-right:2.500px"><path d="M0 0.300L3 3.700L6 0.300Z" fill="#a31515"/></svg>10%</div>
<div class="ttl" style="left:760.200px;top:593.500px">Website Calls</div>
<div class="bdg up" style="left:1017px;top:592.5px;width:35.5px"><svg width="5.200" height="3" viewBox="0 0 6 4" preserveAspectRatio="none" style="display:inline-block;vertical-align:0.600px;margin-right:2.500px"><path d="M0 4L3 0L6 4Z" fill="#1c7a3c"/></svg>10%</div>
<div class="gl" style="left:113.5px;top:626px;width:271.9px"></div>
<div class="lbl" style="left:93.8px;top:619.6px;line-height:11px;font-size:7.4px">30</div>
<div class="gl" style="left:113.5px;top:649px;width:271.9px"></div>
<div class="lbl" style="left:93.8px;top:642.6px;line-height:11px;font-size:7.4px">20</div>
<div class="gl" style="left:113.5px;top:672px;width:271.9px"></div>
<div class="lbl" style="left:93.8px;top:665.6px;line-height:11px;font-size:7.4px">10</div>
<div class="gl" style="left:113.5px;top:695px;width:271.9px"></div>
<div class="lbl" style="left:93.8px;top:688.6px;line-height:11px;font-size:7.4px">00</div>
<div class="xl" style="left:125.3px;top:708.200px;line-height:11px">31-Jan</div>
<div class="xl" style="left:175.0px;top:708.200px;line-height:11px">02-Feb</div>
<div class="xl" style="left:222.0px;top:708.200px;line-height:11px">05-Feb</div>
<div class="xl" style="left:270.2px;top:708.200px;line-height:11px">10-Feb</div>
<div class="xl" style="left:318.8px;top:708.200px;line-height:11px">14-Feb</div>
<div class="xl" style="left:367.3px;top:708.200px;line-height:11px">18-Feb</div>
<svg class="abs" style="left:109.5px;top:615px" width="279.9" height="90" viewBox="109.5 615 279.9 90"><path d="M114,695.300 C118,695.300 121,695.300 124.400,694.800 C136,693.200 150,689.500 156,683.500 C161,678.500 161.500,672 162.500,664 C165,645 169,626.200 176.600,626.200 C183,626.200 186,641 194,653 C202,665 212,672.300 222,672.300 C236,672.300 246,660 253,650 C259,641.500 264,640 269,640 C278,640 286,650 296,661 C304,670 311,676.500 318.800,681.500 C334,691 352,695 367.300,695.300 L372,695.300" fill="none" stroke="#2a59c0" stroke-width="0.950" stroke-linejoin="round"/><circle cx="124.4" cy="695.3" r="1.450" fill="#1d55c4"/><circle cx="176.6" cy="626.2" r="1.450" fill="#1d55c4"/><circle cx="222" cy="672.3" r="1.450" fill="#1d55c4"/><circle cx="269" cy="640" r="1.450" fill="#1d55c4"/><circle cx="318.8" cy="681.5" r="1.450" fill="#1d55c4"/><circle cx="367.3" cy="695.3" r="1.450" fill="#1d55c4"/></svg>
<div class="gl" style="left:443.7px;top:626px;width:272.0px"></div>
<div class="lbl" style="left:424px;top:619.6px;line-height:11px;font-size:8.1px">30</div>
<div class="gl" style="left:443.7px;top:649px;width:272.0px"></div>
<div class="lbl" style="left:424px;top:642.6px;line-height:11px;font-size:8.1px">20</div>
<div class="gl" style="left:443.7px;top:672px;width:272.0px"></div>
<div class="lbl" style="left:424px;top:665.6px;line-height:11px;font-size:8.1px">10</div>
<div class="gl" style="left:443.7px;top:695px;width:272.0px"></div>
<div class="lbl" style="left:424px;top:688.6px;line-height:11px;font-size:8.1px">00</div>
<div class="xl" style="left:456.0px;top:708.200px;line-height:11px">31-Jan</div>
<div class="xl" style="left:505.6px;top:708.200px;line-height:11px">02-Feb</div>
<div class="xl" style="left:552.6px;top:708.200px;line-height:11px">05-Feb</div>
<div class="xl" style="left:601.0px;top:708.200px;line-height:11px">10-Feb</div>
<div class="xl" style="left:649.4px;top:708.200px;line-height:11px">14-Feb</div>
<div class="xl" style="left:698.0px;top:708.200px;line-height:11px">18-Feb</div>
<svg class="abs" style="left:439.7px;top:615px" width="280.0" height="90" viewBox="439.7 615 280.0 90"><path d="M444.500,695.300 L517.300,695.300 C524,677 536,651 552.600,649.200 C556,648.800 560,649.500 563,652 C570,658 574,672 582,679 C588,684 594,685.500 601.200,685.500 C610,685.500 618,684.200 627,684.200 C636,684.200 644,685.500 651,687.300 C660,689.600 668,692.500 675,695.300 L715.700,695.300" fill="none" stroke="#2a59c0" stroke-width="0.950" stroke-linejoin="round"/><circle cx="456.5" cy="695.3" r="1.450" fill="#1d55c4"/><circle cx="506.6" cy="695.3" r="1.450" fill="#1d55c4"/><circle cx="552.6" cy="649.2" r="1.450" fill="#1d55c4"/><circle cx="601.2" cy="685.5" r="1.450" fill="#1d55c4"/><circle cx="651" cy="687.3" r="1.450" fill="#1d55c4"/><circle cx="698" cy="695.3" r="1.450" fill="#1d55c4"/></svg>
<div class="gl" style="left:781px;top:626px;width:271.3px"></div>
<div class="lbl" style="left:760.8px;top:619.6px;line-height:11px;font-size:7.8px">30</div>
<div class="gl" style="left:781px;top:649px;width:271.3px"></div>
<div class="lbl" style="left:760.8px;top:642.6px;line-height:11px;font-size:7.8px">20</div>
<div class="gl" style="left:781px;top:672px;width:271.3px"></div>
<div class="lbl" style="left:760.8px;top:665.6px;line-height:11px;font-size:7.8px">10</div>
<div class="gl" style="left:781px;top:695px;width:271.3px"></div>
<div class="lbl" style="left:760.8px;top:688.6px;line-height:11px;font-size:7.8px">00</div>
<div class="xl" style="left:792.4px;top:708.200px;line-height:11px">31-Jan</div>
<div class="xl" style="left:842.0px;top:708.200px;line-height:11px">02-Feb</div>
<div class="xl" style="left:889.2px;top:708.200px;line-height:11px">05-Feb</div>
<div class="xl" style="left:937.6px;top:708.200px;line-height:11px">10-Feb</div>
<div class="xl" style="left:986.4px;top:708.200px;line-height:11px">14-Feb</div>
<div class="xl" style="left:1035.0px;top:708.200px;line-height:11px">18-Feb</div>
<svg class="abs" style="left:777px;top:615px" width="279.3" height="90" viewBox="777 615 279.3 90"><path d="M781.400,695.300 C782,665 784,626.400 794,626.400 C803,626.400 805,648 811,660 C818,673 830,680.700 842.500,680.700 C858,682.500 874,678.500 889.200,676.100 C906,673 920,669.500 936.300,669.500 C952,669.500 970,675 986,682 C1002,689 1020,695 1036,695.300 L1052,695.300" fill="none" stroke="#2a59c0" stroke-width="0.950" stroke-linejoin="round"/><circle cx="794" cy="626.4" r="1.450" fill="#1d55c4"/><circle cx="842.5" cy="680.7" r="1.450" fill="#1d55c4"/><circle cx="889.2" cy="676.1" r="1.450" fill="#1d55c4"/><circle cx="936.3" cy="669.5" r="1.450" fill="#1d55c4"/><circle cx="986" cy="682" r="1.450" fill="#1d55c4"/><circle cx="1036" cy="695.3" r="1.450" fill="#1d55c4"/></svg>

</div>
</body>
</html>
